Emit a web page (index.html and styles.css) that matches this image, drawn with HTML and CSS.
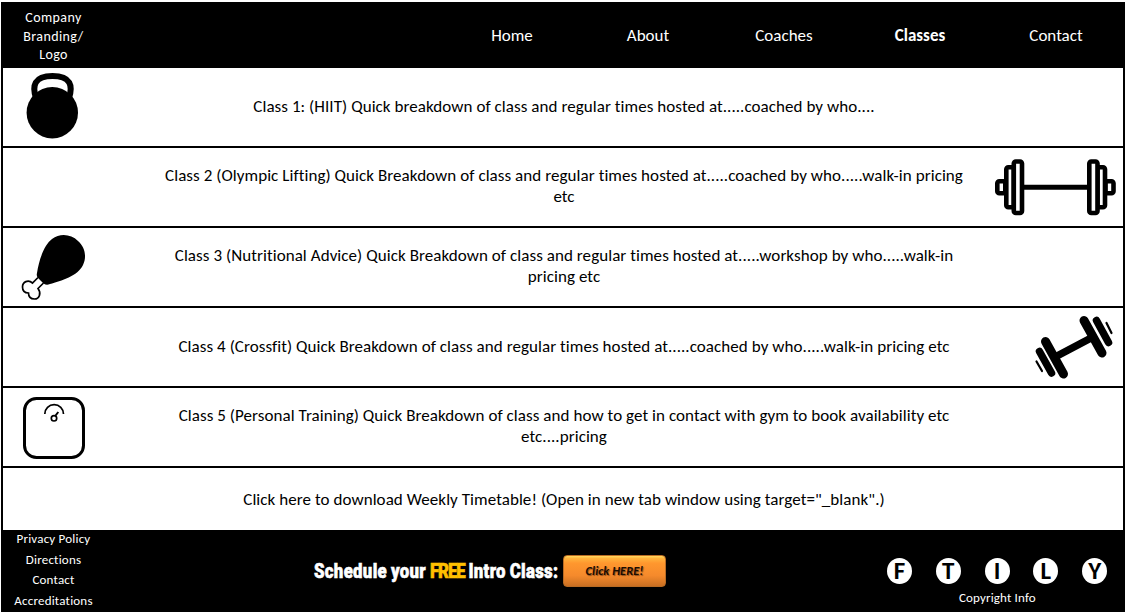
FILE: index.html
```html
<!DOCTYPE html>
<html lang="en">
<head>
<meta charset="utf-8">
<title>Classes</title>
<link rel="stylesheet" href="styles.css">
</head>
<body>
<div class="page">
  <header class="header">
    <div class="brand">Company<br>Branding/<br>Logo</div>
    <nav class="nav">
      <a>Home</a><a>About</a><a>Coaches</a><a class="active">Classes</a><a>Contact</a>
    </nav>
  </header>
  <main>
    <section class="row">
      <div class="icon">
        <svg width="100" height="78" viewBox="3 68 100 78"><circle cx="52.3" cy="112.7" r="25.7"/><path d="M36 98C32 86 34 76 52.500 76S73 86 69 98" fill="none" stroke="#000" stroke-width="6"/></svg>
      </div>
      <p class="text one">Class 1: (HIIT) Quick breakdown of class and regular times hosted at.....coached by who....</p>
    </section>
    <section class="row">
      <p class="text two">Class 2 (Olympic Lifting) Quick Breakdown of class and regular times hosted at.....coached by who.....walk-in pricing<br>etc</p>
      <div class="icon right">
        <svg width="140" height="78" viewBox="983 148 140 78" fill="#fff" stroke="#000" stroke-width="4.600"><path d="M1023 187.300H1089" stroke-width="5"/><rect x="997.300" y="181.300" width="8" height="12" rx="2"/><rect x="1006.300" y="167.300" width="7.500" height="40" rx="2"/><rect x="1013.800" y="161.500" width="8.200" height="51.500" rx="2"/><rect x="1105.500" y="181.300" width="8" height="12" rx="2"/><rect x="1097.500" y="167.300" width="7.500" height="40" rx="2"/><rect x="1089.300" y="161.500" width="8.200" height="51.500" rx="2"/></svg>
      </div>
    </section>
    <section class="row">
      <div class="icon">
        <svg width="100" height="78" viewBox="3 228 100 78"><path d="M37 273C39 260 44 245 52 239C60 233 71 234 78 241C85 247 87 257 83 265C78 276 61 281 50 284C46 286 44 284 41 281C38 278 36 277 37 273Z"/><path d="M38 277.500L32.500 283C28 279 22.500 282 22.500 287C22.500 291 25 293 28.500 293C28.500 297 31 299 34.500 299C39.500 299 41.500 293 38 288.500L43.500 283" fill="none" stroke="#000" stroke-width="1.700"/></svg>
      </div>
      <p class="text two">Class 3 (Nutritional Advice) Quick Breakdown of class and regular times hosted at.....workshop by who.....walk-in<br>pricing etc</p>
    </section>
    <section class="row">
      <p class="text one">Class 4 (Crossfit) Quick Breakdown of class and regular times hosted at.....coached by who.....walk-in pricing etc</p>
      <div class="icon right">
        <svg width="140" height="78" viewBox="983 308 140 78" fill="none" stroke="#000" stroke-linecap="round"><path d="M1056 356.500L1092 337.500" stroke-width="7.500"/><path d="M1045.500 341.500L1063.500 374M1084 320.500L1102 353" stroke-width="9"/><path d="M1039.500 351.500L1051.500 373M1096.500 320.500L1108.500 342.500" stroke-width="7.500"/><path d="M1036.500 361.500L1042 371M1106.500 323L1111.500 333" stroke-width="2.200"/></svg>
      </div>
    </section>
    <section class="row">
      <div class="icon">
        <svg width="100" height="78" viewBox="3 388 100 78" fill="none" stroke="#000"><rect x="24.500" y="398.500" width="59" height="59" rx="12" stroke-width="3"/><path d="M44.800 414A9.300 9.300 0 0 1 63.500 414" stroke-width="1.700"/><circle cx="54" cy="418.300" r="2.700" stroke-width="1.700"/><path d="M55.200 416L58.300 412" stroke-width="2"/></svg>
      </div>
      <p class="text two">Class 5 (Personal Training) Quick Breakdown of class and how to get in contact with gym to book availability etc<br>etc....pricing</p>
    </section>
    <section class="row download">
      <p class="text">Click here to download Weekly Timetable! (Open in new tab window using target="_blank".)</p>
    </section>
  </main>
  <footer class="footer">
    <div class="links"><a>Privacy Policy</a><a>Directions</a><a>Contact</a><a>Accreditations</a></div>
    <div class="cta">
      <div class="headline"><span>Schedule your <b>FREE</b> Intro Class:</span></div>
      <button class="button">Click HERE!</button>
    </div>
    <div class="social">
      <div class="badges"><span>F</span><span>T</span><span>I</span><span>L</span><span>Y</span></div>
      <div class="copy">Copyright Info</div>
    </div>
  </footer>
</div>
</body>
</html>
```
FILE: styles.css
```css
* { box-sizing: border-box; }
body { margin: 0; background: #fff; color: #000; font: 17px/21px Calibri, Carlito, Lato, sans-serif; font-variant-ligatures: none; }
.page { width: 1124px; height: 610px; margin: 2px 0 0 1px; border: 2px solid #000; border-top: 0; border-bottom: 0; }
.header { height: 66px; background: #000; color: #fff; display: flex; justify-content: space-between; }
.brand { width: 101px; padding-top: 7px; text-align: center; font-size: 14px; line-height: 18.5px; letter-spacing: .4px; }
.nav { display: grid; grid-template-columns: repeat(5, 136px); width: 680px; margin-right: -1px; padding-top: 23px; text-align: center; }
.active { font-weight: 700; }
.row { height: 80px; border-bottom: 2px solid #000; display: grid; grid-template: 100% / 100%; }
.icon, .text { grid-area: 1 / 1; }
.icon { justify-self: start; }
.icon.right { justify-self: end; }
.icon svg { display: block; }
.text { margin: 0; padding-left: 2px; align-self: center; text-align: center; white-space: nowrap; letter-spacing: .062px; }
.one { margin-top: -2px; }
.two { margin-top: -3px; }
.download { height: 62px; border: 0; }
.footer { height: 82px; background: #000; color: #fff; display: grid; grid-template-columns: 101px 1fr 236px; }
.links { display: flex; flex-direction: column; align-items: center; font-size: 13px; line-height: 20.7px; letter-spacing: .2px; }
.links a { height: 20.7px; margin-top: -1px; margin-bottom: 1px; }
.cta { display: flex; align-items: center; padding-left: 210px; gap: 4px; }
.headline { flex: none; width: 245px; white-space: nowrap; font: 900 21px/32px Impact, Roboto, sans-serif; }
.headline span { display: inline-block; transform: scaleX(.8); transform-origin: left; letter-spacing: .38px; word-spacing: -.7px; -webkit-text-stroke: .6px; }
.headline b { color: #ffc000; letter-spacing: -1.4px; }
.button { flex: none; width: 103px; height: 32px; padding: 0 0 1px; border: 1px solid #b96b23; border-radius: 4px; background: linear-gradient(#ffda61 0, #ffb33d 8%, #ff972e 24%, #f58a2c 65%, #c96f22 100%); color: #1c0d00; font: italic 700 12.5px Calibri, Carlito, Lato, sans-serif; text-shadow: 1px 1px 1px #8b4a1a; }
.social { padding-top: 28px; }
.badges { display: flex; gap: 23.8px; }
.badges span { width: 25px; height: 26px; border-radius: 50%; background: #fff; color: #000; display: grid; place-items: center; font: 700 25px/26px Calibri, Carlito, sans-serif; }
.copy { font-size: 13px; line-height: 18px; letter-spacing: .15px; margin: 5px 0 0 72px; }
```
